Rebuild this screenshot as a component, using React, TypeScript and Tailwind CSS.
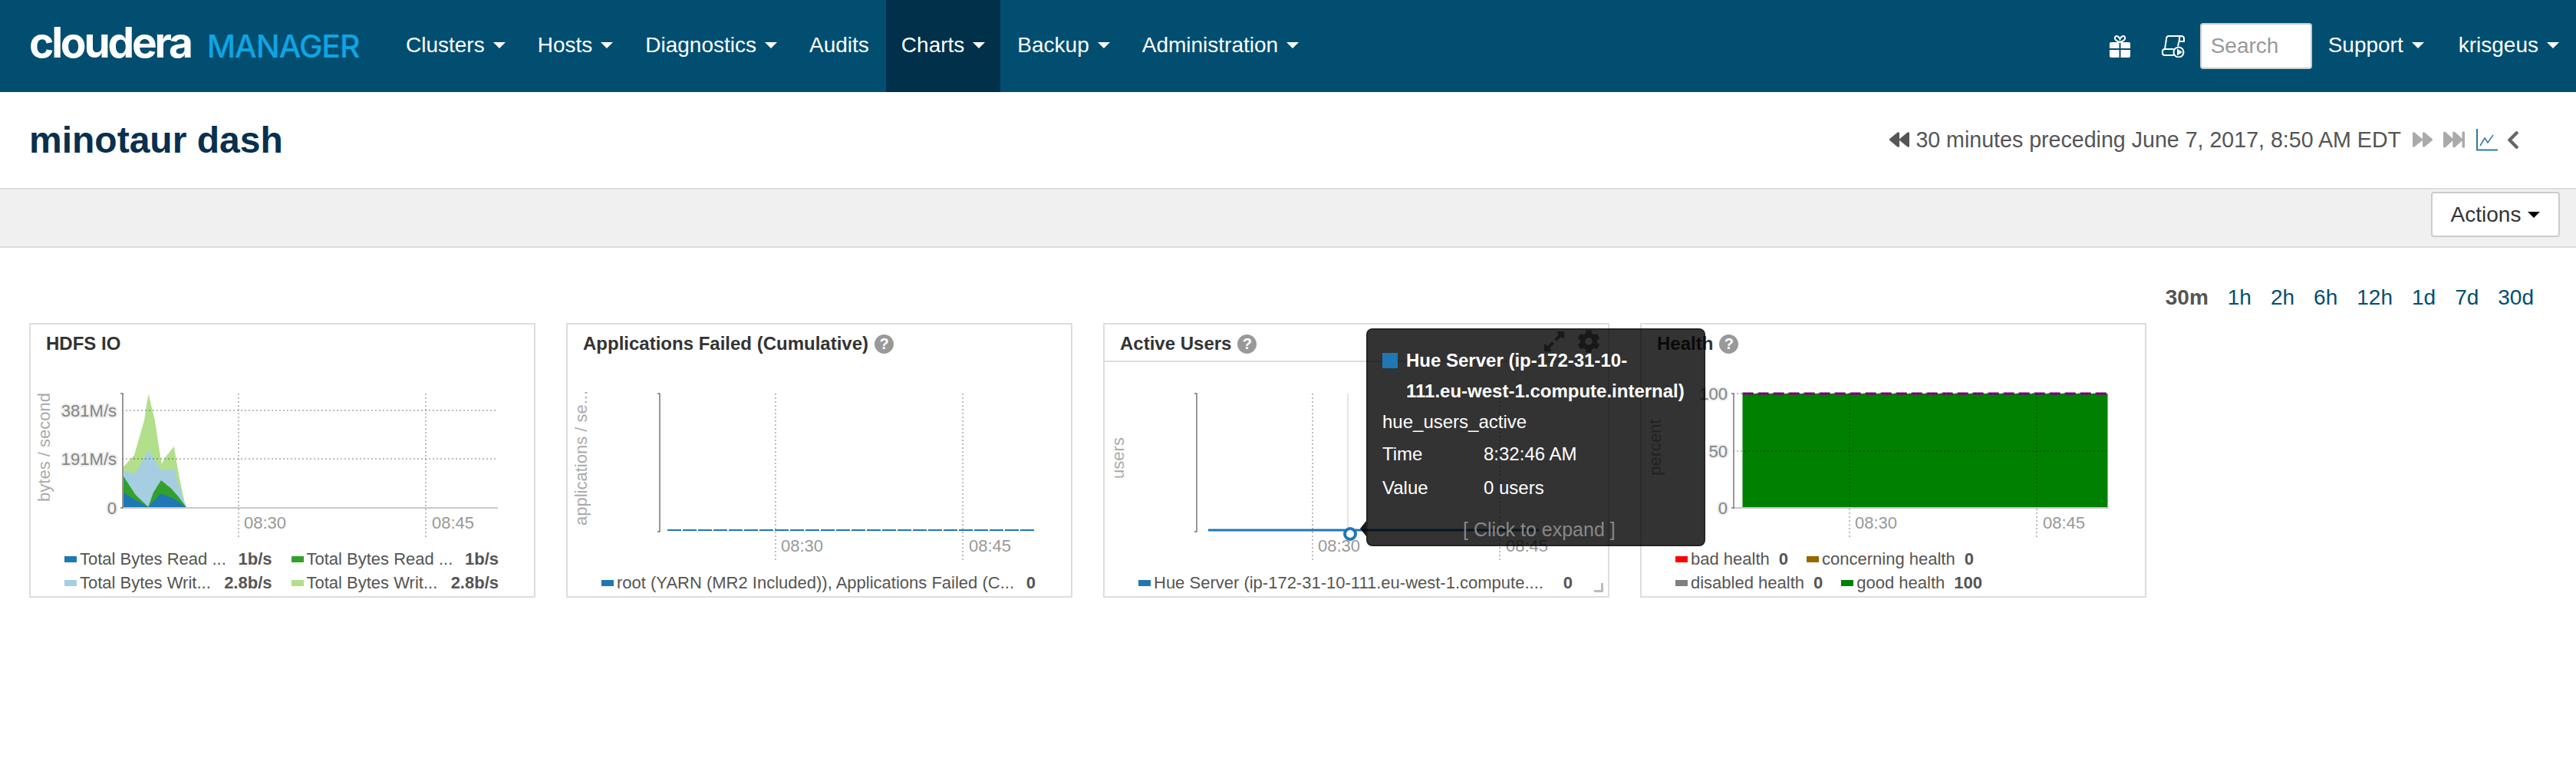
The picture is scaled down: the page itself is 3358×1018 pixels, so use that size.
import type { ReactNode } from "react";
import { FaBackward, FaChevronLeft, FaCog, FaExpandAlt, FaFastForward, FaForward } from "react-icons/fa";

function Caret({ className = "border-t-white" }: { className?: string }) {
  return <span className={`ml-[11px] inline-block h-0 w-0 border-x-[8px] border-t-[8px] border-x-transparent ${className}`} />;
}

function NavItem({ label, caret = true, active = false }: { label: string; caret?: boolean; active?: boolean }) {
  return (
    <a className={`flex h-full items-center px-5 pb-[3px] text-white ${active ? "bg-[#01304a]" : ""}`}>
      {label}
      {caret && <Caret />}
    </a>
  );
}

function GiftIcon() {
  return (
    <svg width="29" height="29" viewBox="0 0 29 29" className="block">
      <path d="M14.5 9 C10 8 7 5 8 2.5 C9 0 13 1 14.5 5 C16 1 20 0 21 2.5 C22 5 19 8 14.5 9 Z" fill="none" stroke="white" strokeWidth="2" />
      <path d="M1 11 Q1 9 3 9 H13.5 V17 H1 Z M15.5 9 H26 Q28 9 28 11 V17 H15.5 Z M1 19 H13.5 V29 H3 Q1 29 1 27 Z M15.5 19 H28 V27 Q28 29 26 29 H15.5 Z" fill="white" />
    </svg>
  );
}

function ScrollIcon() {
  return (
    <svg width="30" height="30" viewBox="0 0 30 30" className="block" fill="none" stroke="white" strokeWidth="2">
      <path d="M9 2 H25 Q29 2 29 5 V9 H23 V5 Q23 2 25 2" />
      <path d="M9 2 Q6 2 6 6 L4 19" />
      <path d="M23 7 L21 15" />
      <rect x="1" y="19" width="16" height="8" rx="3" />
      <circle cx="22" cy="23" r="6.5" fill="#024e71" />
      <path d="M20 18.5 L27 23 L20 27.5 Z" fill="white" stroke="none" />
    </svg>
  );
}

function TrendIcon() {
  return (
    <svg width="28" height="29" viewBox="0 0 28 29" className="block" fill="none" stroke="#33799c">
      <path d="M1 0 V27.5 H28" strokeWidth="2" />
      <path d="M5 22 L11 12 L15 18 L22 8" strokeWidth="1.5" />
    </svg>
  );
}

type ChartProps = {
  height: number;
  base: number;
  axisBottom: number;
  yLabel: string;
  yLabelCenter: number;
  ticks: { y: number; label: string }[];
  children?: ReactNode;
};

function AxisText({ x, y, children }: { x: number; y: number; children: string }) {
  return (
    <text x={x} y={y} textAnchor="end" fontSize="22" fill="#858585" stroke="#eeeeee" strokeWidth="4" paintOrder="stroke">
      {children}
    </text>
  );
}

function Chart({ height, base, axisBottom, yLabel, yLabelCenter, ticks, children }: ChartProps) {
  const gridBottom = base + 40;
  return (
    <svg width="656" height={height} viewBox={`0 0 656 ${height}`} className="block shrink-0">
      <text
        x="25"
        y={yLabelCenter}
        textAnchor="middle"
        fontSize="22"
        fill="#aaaaaa"
        transform={`rotate(-90 25 ${yLabelCenter})`}
      >
        {yLabel}
      </text>
      {children}
      <g stroke="#000000" strokeOpacity="0.26" strokeWidth="2" strokeDasharray="2 3" fill="none">
        <path d={`M271 41 V${gridBottom}`} />
        <path d={`M515 41 V${gridBottom}`} />
        {ticks.filter((t) => t.y !== base).map((t) => (
          <path key={t.y} d={`M119 ${t.y} H609`} />
        ))}
      </g>
      {ticks.some((t) => t.y === base) && <path d={`M119 ${base} H609`} stroke="#c8c8c8" strokeWidth="2" />}
      <path d={`M117 41 H120 V${axisBottom} H117`} fill="none" stroke="#777777" strokeWidth="1.5" />
      {ticks.map((t) => (
        <AxisText key={t.label} x={112} y={t.y + 8}>
          {t.label}
        </AxisText>
      ))}
      <text x="278" y={base + 27} fontSize="22" fill="#999999">08:30</text>
      <text x="523" y={base + 27} fontSize="22" fill="#999999">08:45</text>
    </svg>
  );
}

function LegendItem({ color, label, value, grow = false }: { color: string; label: string; value: string; grow?: boolean }) {
  return (
    <div className={`flex h-[31px] items-center whitespace-nowrap ${grow ? "min-w-0 justify-between" : ""}`}>
      <span className="flex items-center">
        <span className="mr-1 h-2 w-4 shrink-0" style={{ backgroundColor: color }} />
        <span>{label}</span>
      </span>
      <span className={`font-bold ${grow ? "ml-2" : "ml-3"}`}>{value}</span>
    </div>
  );
}

function Card({ title, help = true, active = false, children, legend }: { title: string; help?: boolean; active?: boolean; children: ReactNode; legend: ReactNode }) {
  return (
    <section className="relative flex h-[358px] w-[660px] flex-col border-2 border-[#dddddd]">
      <header className={`flex h-[49px] shrink-0 items-center gap-2 border-b-2 pl-5 pt-[3px] text-[24px] font-bold text-[#333333] ${active ? "border-[#dddddd]" : "border-transparent"}`}>
        {title}
        {help && <span className="flex h-[25px] w-[25px] items-center justify-center rounded-full bg-[#999999] text-[20px] font-bold leading-none text-white">?</span>}
      </header>
      {children}
      <div className="mt-auto mb-[2px] pl-11 pr-[46px] text-[22px] text-[#555555]">{legend}</div>
    </section>
  );
}

const lightGreen = "303,355 345,310 365,240 385,170 395,100 402,70 410,110 425,170 440,270 452,345 465,320 500,275 520,390 545,510 548,514 303,514";
const lightBlue = "303,372 350,382 400,290 452,370 500,363 520,430 548,512 548,514 303,514";
const green = "303,392 350,465 400,512 420,455 450,408 490,440 520,475 548,513 548,514 303,514";
const blue = "303,455 340,480 400,512 450,460 500,480 548,513 548,514 303,514";

// traced from a 3x crop whose origin is (60,490), brought back to the svg's own coordinates
function traced(points: string) {
  return points
    .split(" ")
    .map((p) => {
      const [x, y] = p.split(",").map(Number);
      return `${(60 + x / 3 - 40).toFixed(1)},${(490 + y / 3 - 472).toFixed(1)}`;
    })
    .join(" ");
}

export default function App() {
  return (
    <div className="min-h-[1018px] bg-white font-['Liberation_Sans',Arial,sans-serif]">
      <nav className="flex h-[120px] items-center bg-[#024e71] text-[28px]">
        <a className="ml-[38px] flex w-[471px] items-baseline pb-[10px] font-['Inter',sans-serif] leading-none">
          <span className="text-[55px] font-bold tracking-[-3.2px] text-white">cloudera</span>
          <span className="ml-[21px] text-[41px] font-medium tracking-[-1.2px] text-[#0ea5e3]">MANAGER</span>
        </a>
        <div className="flex h-full gap-[2px]">
          <NavItem label="Clusters" />
          <NavItem label="Hosts" />
          <NavItem label="Diagnostics" />
          <NavItem label="Audits" caret={false} />
          <NavItem label="Charts" active />
          <NavItem label="Backup" />
          <NavItem label="Administration" />
        </div>
        <div className="ml-auto flex h-full items-center pr-[22px] text-white">
          <GiftIcon />
          <span className="ml-[40px]"><ScrollIcon /></span>
          <input
            placeholder="Search"
            readOnly
            className="ml-[20px] h-[60px] w-[146px] rounded border-2 border-[#cccccc] bg-white px-3 text-[28px] text-[#333333] placeholder:text-[#999999]"
          />
          <span className="ml-[21px] flex items-center pb-[3px]">Support<Caret /></span>
          <span className="ml-[45px] flex items-center pb-[3px]">krisgeus<Caret /></span>
        </div>
      </nav>

      <div className="flex h-[125px] items-center justify-between pl-[38px] pr-[73px]">
        <h1 className="text-[48px] font-bold text-[#08304f]">minotaur dash</h1>
        <div className="flex items-center text-[28.6px] text-[#555555]">
          <FaBackward className="mr-[8px] h-[26px] w-[26px]" />
          <span>30 minutes preceding June 7, 2017, 8:50 AM EDT</span>
          <FaForward className="ml-[15px] h-[26px] w-[26px] text-[#aaaaaa]" />
          <FaFastForward className="ml-[14px] h-[28px] w-[28px] text-[#aaaaaa]" />
          <span className="ml-[15px]"><TrendIcon /></span>
          <FaChevronLeft className="ml-[11px] h-[27px] w-[18px] text-[#666666]" />
        </div>
      </div>

      <div className="flex h-[78px] items-start justify-end border-y-2 border-[#dddddd] bg-[#f0f0f0] pr-[21px] pt-[3px]">
        <button className="flex h-[59px] w-[168px] items-center justify-center rounded border-2 border-[#cccccc] bg-white text-[28px] text-[#333333]">
          Actions
          <span className="ml-[9px] inline-block h-0 w-0 border-x-[8px] border-t-[8px] border-x-transparent border-t-black" />
        </button>
      </div>

      <div className="flex h-[98px] items-center justify-end gap-[25px] pt-[32px] pr-[55px] text-[28px] text-[#024e71]">
        <span className="font-bold text-[#555555]">30m</span>
        <span>1h</span>
        <span>2h</span>
        <span>6h</span>
        <span>12h</span>
        <span>1d</span>
        <span>7d</span>
        <span>30d</span>
      </div>

      <div className="flex gap-10 pl-[38px]">
        <Card
          title="HDFS IO"
          help={false}
          legend={
            <div className="grid grid-cols-2 gap-x-[25px]">
              <LegendItem grow color="#1f77b4" label="Total Bytes Read ..." value="1b/s" />
              <LegendItem grow color="#33a02c" label="Total Bytes Read ..." value="1b/s" />
              <LegendItem grow color="#a6cee3" label="Total Bytes Writ..." value="2.8b/s" />
              <LegendItem grow color="#b2df8a" label="Total Bytes Writ..." value="2.8b/s" />
            </div>
          }
        >
          <Chart
            height={241}
            base={190}
            axisBottom={190}
            yLabel="bytes / second"
            yLabelCenter={111}
            ticks={[
              { y: 63, label: "381M/s" },
              { y: 126, label: "191M/s" },
              { y: 190, label: "0" },
            ]}
          >
            <polygon points={traced(lightGreen)} fill="#b2df8a" />
            <polygon points={traced(lightBlue)} fill="#a6cee3" />
            <polygon points={traced(green)} fill="#33a02c" />
            <polygon points={traced(blue)} fill="#1f77b4" />
          </Chart>
        </Card>

        <Card
          title="Applications Failed (Cumulative)"
          legend={
            <LegendItem grow color="#1f77b4" label="root (YARN (MR2 Included)), Applications Failed (C..." value="0" />
          }
        >
          <Chart height={272} base={220} axisBottom={221} yLabel="applications / se..." yLabelCenter={125} ticks={[]}>
            <path d="M130 219 H608" stroke="#1f77b4" strokeWidth="2" strokeDasharray="18 2" />
          </Chart>
        </Card>

        <Card
          title="Active Users"
          active
          legend={
            <LegendItem grow color="#1f77b4" label="Hue Server (ip-172-31-10-111.eu-west-1.compute...." value="0" />
          }
        >
          <Chart height={272} base={220} axisBottom={221} yLabel="users" yLabelCenter={125} ticks={[]}>
            <path d="M317 41 V219" stroke="#dddddd" strokeWidth="1.5" />
            <path d="M135 219 H566" stroke="#1f77b4" strokeWidth="3" />
            <circle cx="320" cy="224" r="7" fill="white" stroke="#1f77b4" strokeWidth="4" />
          </Chart>
          <div className="absolute left-[571px] top-[7px] flex gap-[15px] text-[#777777]">
            <FaExpandAlt className="h-[30px] w-[30px]" />
            <FaCog className="h-[30px] w-[30px]" />
          </div>
          <span className="absolute bottom-[5px] right-[6px] h-3 w-3 border-b-[3px] border-r-[3px] border-[#bbbbbb]" />
          <div className="absolute left-[341px] top-[5px] z-10 h-[284px] w-[442px] rounded-lg border-2 border-black/30 bg-black/80 pl-[19px] pt-[20px] text-[24px] text-white">
            <span className="absolute -left-[10px] top-[249px] h-0 w-0 border-y-[10px] border-r-[8px] border-y-transparent border-r-black/90" />
            <div className="flex whitespace-nowrap font-bold leading-[40px]">
              <span className="mr-[11px] mt-[10px] h-5 w-5 bg-[#1f77b4]" />
              <span>
                Hue Server (ip-172-31-10-
                <br />
                111.eu-west-1.compute.internal)
              </span>
            </div>
            <div className="leading-[40px]">hue_users_active</div>
            <div className="flex h-[44px] items-center"><span className="w-[132px]">Time</span>8:32:46 AM</div>
            <div className="flex h-[44px] items-center"><span className="w-[132px]">Value</span>0 users</div>
            <div className="mt-[12px] pl-[105px] text-[25px] leading-[40px] text-[#888888]">[ Click to expand ]</div>
          </div>
        </Card>

        <Card
          title="Health"
          legend={
            <>
              <div className="flex gap-6">
                <LegendItem color="#ff0000" label="bad health" value="0" />
                <LegendItem color="#996600" label="concerning health" value="0" />
              </div>
              <div className="flex gap-6">
                <LegendItem color="#808080" label="disabled health" value="0" />
                <LegendItem color="#008000" label="good health" value="100" />
              </div>
            </>
          }
        >
          <Chart
            height={241}
            base={190}
            axisBottom={190}
            yLabel="percent"
            yLabelCenter={111}
            ticks={[
              { y: 41, label: "100" },
              { y: 116, label: "50" },
              { y: 190, label: "0" },
            ]}
          >
            <rect x="131.5" y="41" width="476" height="149" fill="#008000" />
            <path d="M131.5 41 H608" stroke="#800080" strokeWidth="3" strokeDasharray="14 6" />
          </Chart>
        </Card>
      </div>
    </div>
  );
}
